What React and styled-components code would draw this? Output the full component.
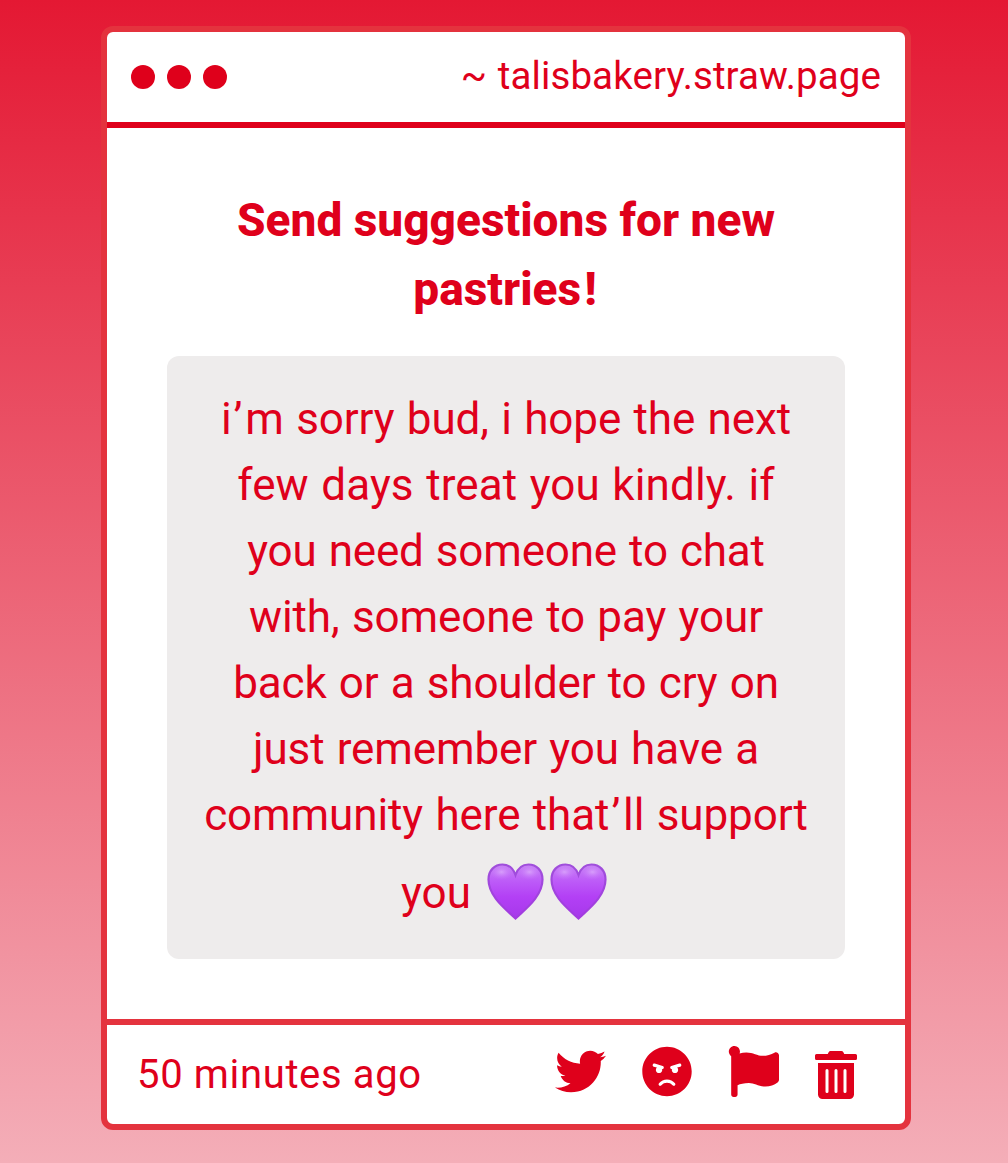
import React from "react";
import styled, { createGlobalStyle } from "styled-components";
import { FaAngry, FaFlag, FaTrashAlt, FaTwitter } from "react-icons/fa";

const GlobalStyle = createGlobalStyle`
  * {
    box-sizing: border-box;
  }
  body {
    margin: 0;
    font-family: Roboto, "Liberation Sans", sans-serif;
    color: #df001b;
  }
`;

const Page = styled.main`
  height: 1163px;
  padding: 26px 97px 0 101px;
  background: linear-gradient(180deg, #e41833 0%, #f4aeb8 100%);
`;

const Card = styled.article`
  display: flex;
  flex-direction: column;
  height: 1104px;
  border: 6px solid #e4333e;
  border-radius: 12px;
  background: #fff;
`;

const Header = styled.header`
  display: flex;
  align-items: center;
  justify-content: space-between;
  height: 96px;
  padding: 0 24px;
  border-bottom: 6px solid #df001b;
`;

const Dots = styled.div`
  display: flex;
  gap: 12px;
`;

const Dot = styled.span`
  width: 24px;
  height: 24px;
  border-radius: 50%;
  background: #df001b;
`;

const Address = styled.span`
  margin-bottom: 2px;
  font-size: 38.5px;
  line-height: 58px;
  letter-spacing: 0.1px;
  word-spacing: 1px;
`;

const Body = styled.section`
  flex: 1;
  padding: 58px 60px 0;
  text-align: center;
`;

const Title = styled.h1`
  margin: 0 0 32px;
  font-size: 46px;
  font-weight: 800;
  line-height: 69px;
`;

const Exclamation = styled.span`
  margin: 0 2px 0 3px;
`;

const Message = styled.div`
  height: 603px;
  padding: 30px 0;
  border-radius: 12px;
  background: #eeecec;
`;

const Line = styled.p`
  margin: 0;
  font-size: 44px;
  line-height: 66px;
  letter-spacing: ${({ $spacing }) => $spacing || 0}px;
  word-spacing: 1.5px;
  white-space: nowrap;
`;

const Apostrophe = styled.span`
  margin: 0 3px 0 2px;
`;

const LastLine = styled(Line)`
  display: flex;
  justify-content: center;
  padding: 12px 3px 0 0;
`;

const Hearts = styled.span`
  display: flex;
  gap: 5px;
  margin: 3px 0 0 16px;
`;

const Footer = styled.footer`
  display: flex;
  align-items: center;
  justify-content: space-between;
  height: 105px;
  padding: 0 48px 0 30px;
  border-top: 6px solid #e4333e;
`;

const Time = styled.span`
  font-size: 40px;
  letter-spacing: 0.65px;
`;

const Actions = styled.div`
  display: flex;
  gap: 36px;
  margin-bottom: 5px;
`;

const Action = styled.button`
  display: flex;
  align-items: flex-end;
  height: 51px;
  padding: 0;
  border: 0;
  background: none;
  color: inherit;
  svg {
    display: block;
    width: ${({ $width }) => $width}px;
    height: 51px;
  }
`;

const DeleteAction = styled(Action)`
  padding-top: 5px;
  height: 53px;
  svg {
    height: 48px;
  }
`;

const lines = [
  { text: "i’m sorry bud, i hope the next", spacing: -0.09 },
  { text: "few days treat you kindly. if", spacing: 0.1 },
  { text: "you need someone to chat", spacing: -0.2 },
  { text: "with, someone to pay your", spacing: -0.08 },
  { text: "back or a shoulder to cry on", spacing: -0.16 },
  { text: "just remember you have a", spacing: -0.12 },
  { text: "community here that’ll support", spacing: -0.09 },
];

const heartPath =
  "M28.500 55.500 C20 47 1.500 34 1.500 16.500 C1.500 7.500 7.500 1.500 15.500 1.500 C22 1.500 26.500 6 28.500 12 C30.500 6 35 1.500 41.500 1.500 C49.500 1.500 55.500 7.500 55.500 16.500 C55.500 34 37 47 28.500 55.500 Z";

const PurpleHeart = () => (
  <svg width="58" height="58" viewBox="0 0 58 58" role="img" aria-label="purple heart">
    <defs>
      <linearGradient id="heartFill" x1="0" y1="0" x2="0" y2="1">
        <stop offset="0" stopColor="#c682f2" />
        <stop offset="0.3" stopColor="#bd5cf8" />
        <stop offset="0.6" stopColor="#b340f5" />
        <stop offset="1" stopColor="#a638ea" />
      </linearGradient>
      <linearGradient id="heartEdge" x1="0" y1="0" x2="0" y2="1">
        <stop offset="0" stopColor="#a04fdb" />
        <stop offset="1" stopColor="#a23ae0" />
      </linearGradient>
      <radialGradient id="heartShine">
        <stop offset="0" stopColor="#dba6fc" stopOpacity="0.85" />
        <stop offset="1" stopColor="#c973ff" stopOpacity="0" />
      </radialGradient>
    </defs>
    <path d={heartPath} fill="url(#heartFill)" />
    <ellipse cx="14.500" cy="9" rx="12" ry="8" fill="url(#heartShine)" />
    <ellipse cx="42.500" cy="9" rx="12" ry="8" fill="url(#heartShine)" />
    <path d={heartPath} fill="none" stroke="url(#heartEdge)" strokeWidth="2.2" />
  </svg>
);

// The apostrophe gets a little air on both sides
const MessageLine = ({ text, spacing }) => {
  const [before, after] = text.split("’");
  return (
    <Line $spacing={spacing}>
      {before}
      {after && <Apostrophe>’</Apostrophe>}
      {after}
    </Line>
  );
};

const App = () => {
  return (
    <Page>
      <GlobalStyle />
      <Card>
        <Header>
          <Dots>
            <Dot />
            <Dot />
            <Dot />
          </Dots>
          <Address>~ talisbakery.straw.page</Address>
        </Header>
        <Body>
          <Title>
            Send suggestions for new
            <br />
            pastries<Exclamation>!</Exclamation>
          </Title>
          <Message>
            {lines.map(({ text, spacing }) => (
              <MessageLine key={text} text={text} spacing={spacing} />
            ))}
            <LastLine as="div">
              you
              <Hearts>
                <PurpleHeart />
                <PurpleHeart />
              </Hearts>
            </LastLine>
          </Message>
        </Body>
        <Footer>
          <Time>50 minutes ago</Time>
          <Actions>
            <Action aria-label="Share on Twitter" $width={51}>
              <FaTwitter />
            </Action>
            <Action aria-label="Block" $width={50}>
              <FaAngry />
            </Action>
            <Action aria-label="Report" $width={51}>
              <FaFlag />
            </Action>
            <DeleteAction aria-label="Delete" $width={42}>
              <FaTrashAlt />
            </DeleteAction>
          </Actions>
        </Footer>
      </Card>
    </Page>
  );
};

export default App;
